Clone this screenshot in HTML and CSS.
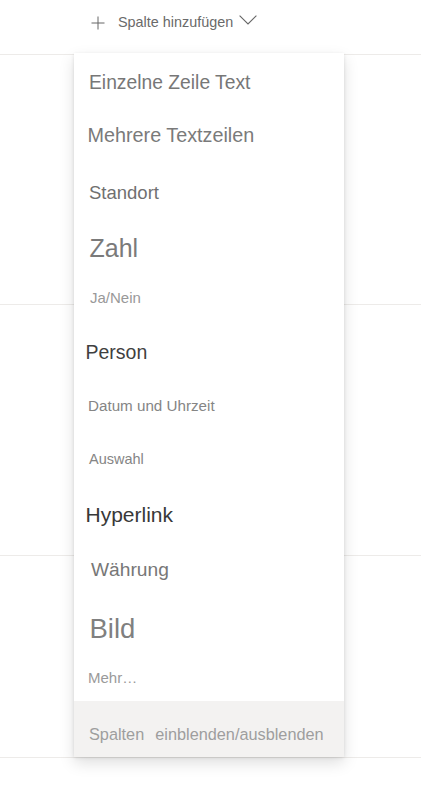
FILE: index.html
```html
<!DOCTYPE html>
<html lang="de">
<head>
<meta charset="utf-8">
<title>Spalte hinzufügen</title>
<link rel="stylesheet" href="styles.css">
</head>
<body>
<div class="page">
  <header class="header">
    <button class="add-column">
      <svg class="plus" width="14" height="14" viewBox="0 0 14 14"><path d="M7 0.5V13.5M0.5 7H13.5" stroke="#666" stroke-width="1" fill="none"/></svg>
      <span class="add-label">Spalte hinzufügen</span>
      <svg class="chevron" width="18" height="10" viewBox="0 0 18 10"><path d="M0.6 0.6L9 9L17.4 0.6" stroke="#666" stroke-width="1.1" fill="none"/></svg>
    </button>
  </header>
  <div class="row row-1"></div>
  <div class="row row-2"></div>
  <div class="row row-3"></div>

  <div class="menu">
    <ul class="menu-list">
      <li class="item i-einzeln">Einzelne Zeile Text</li>
      <li class="item i-mehrere">Mehrere Textzeilen</li>
      <li class="item i-standort">Standort</li>
      <li class="item i-zahl">Zahl</li>
      <li class="item i-janein">Ja/Nein</li>
      <li class="item i-person">Person</li>
      <li class="item i-datum">Datum und Uhrzeit</li>
      <li class="item i-auswahl">Auswahl</li>
      <li class="item i-hyperlink">Hyperlink</li>
      <li class="item i-waehrung">Währung</li>
      <li class="item i-bild">Bild</li>
      <li class="item i-mehr">Mehr…</li>
    </ul>
    <div class="menu-footer"><span>Spalten</span><span class="footer-second">einblenden/ausblenden</span></div>
  </div>
</div>
</body>
</html>
```
FILE: styles.css
```css
* { box-sizing: border-box; }
html, body {
  margin: 0;
  padding: 0;
  background: #fff;
  font-family: "Liberation Sans", Arial, sans-serif;
}
.page {
  position: relative;
  width: 421px;
  height: 800px;
  overflow: hidden;
}
.header {
  height: 55px;
  border-bottom: 1px solid #edebe9;
  padding: 14px 0 0 91px;
}
.add-column {
  display: flex;
  align-items: center;
  border: 0;
  background: none;
  padding: 0;
  font: inherit;
  height: 16px;
  color: #666;
}
.plus { display: block; margin-top: 1px; }
.add-label {
  font-size: 14.4px;
  line-height: 16px;
  margin-left: 13px;
  color: #6a6a6a;
}
.chevron { display: block; margin-left: 6px; margin-top: -4px; }
.row { border-bottom: 1px solid #edebe9; }
.row-1 { height: 250px; }
.row-2 { height: 251px; }
.row-3 { height: 202px; }

.menu {
  position: absolute;
  left: 74px;
  top: 53px;
  width: 270px;
  background: #fff;
  box-shadow: 0 6.4px 14.4px rgba(0,0,0,0.13), 0 1.2px 3.6px rgba(0,0,0,0.11);
}
.menu-list {
  list-style: none;
  margin: 0;
  padding: 0;
}
.item {
  padding-left: 15px;
  white-space: nowrap;
  color: #777;
}
.i-einzeln { font-size: 19.3px; height: 59px; line-height: 59px; }
.i-mehrere { font-size: 19.8px; height: 47px; line-height: 47px; padding-left: 13.5px; color: #7a7a7a; }
.i-standort { font-size: 18.5px; height: 67px; line-height: 67px; padding-left: 15px; color: #707070; }
.i-zahl { font-size: 25px; height: 44px; line-height: 44px; padding-left: 15.5px; color: #7a7a7a; }
.i-janein { font-size: 15px; height: 56px; line-height: 56px; padding-left: 16px; color: #999; }
.i-person { font-size: 19.5px; height: 53px; line-height: 53px; padding-left: 11.5px; color: #3f3f3f; }
.i-datum { font-size: 15.2px; height: 54px; line-height: 54px; padding-left: 14px; color: #858585; }
.i-auswahl { font-size: 14.5px; height: 52px; line-height: 52px; padding-left: 15px; color: #858585; }
.i-hyperlink { font-size: 21px; height: 59px; line-height: 59px; padding-left: 11.5px; color: #383838; }
.i-waehrung { font-size: 19.2px; height: 51px; line-height: 51px; padding-left: 17px; color: #777; }
.i-bild { font-size: 27.5px; height: 67px; line-height: 67px; padding-left: 15.5px; color: #808080; }
.i-mehr { font-size: 15px; height: 39px; line-height: 32px; padding-bottom: 7px; padding-left: 14px; color: #9a9a9a; }

.menu-footer {
  background: #f3f2f1;
  height: 56px;
  padding: 14px 0 4px 15px;
  font-size: 16.3px;
  line-height: 38px;
  color: #9e9e9e;
  white-space: nowrap;
}
.footer-second { margin-left: 11px; }
```
